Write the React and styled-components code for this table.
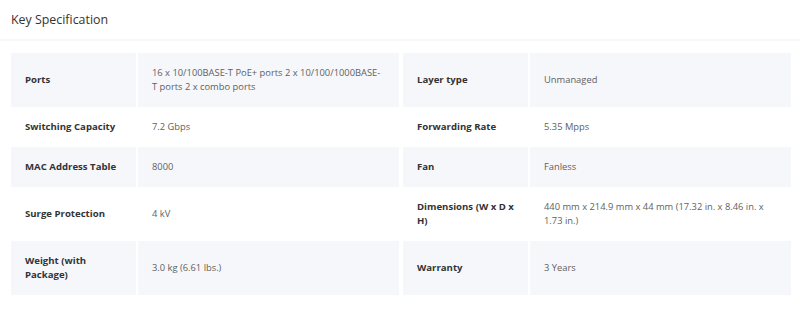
import styled, { createGlobalStyle } from "styled-components";

const GlobalStyle = createGlobalStyle`
  body {
    margin: 0;
    background: #ffffff;
    font-family: "Open Sans", "Noto Sans", sans-serif;
  }
`;

const Section = styled.section`
  width: 800px;
`;

const Header = styled.div`
  height: 39px;
  padding-left: 11px;
  display: flex;
  align-items: center;
  border-bottom: 2px solid #f6f7f9;
`;

const Title = styled.h2`
  margin: 0;
  font-size: 12.4px;
  font-weight: 400;
  color: #333333;
`;

const SpecGrid = styled.div`
  margin: 12px 0 0 11px;
  display: grid;
  grid-template-columns: 125px 261px 127px 261px;
  column-gap: 2px;
  width: 780px;
`;

const Cell = styled.div`
  background: ${(props) => (props.$shaded ? "#f6f7fb" : "#ffffff")};
  padding: 13px 16px 13px 14px;
  line-height: 14px;
  display: flex;
  align-items: center;
`;

const Label = styled(Cell)`
  margin-left: ${(props) => (props.$second ? "2px" : "0")};
  padding-right: 14px;
  font-size: 9.6px;
  font-weight: 700;
  color: #333333;
`;

const Value = styled(Cell)`
  font-size: 9.35px;
  font-weight: 400;
  color: #5f5f5f;
`;

const rows = [
  [
    ["Ports", "16 x 10/100BASE-T PoE+ ports 2 x 10/100/1000BASE-T ports 2 x combo ports"],
    ["Layer type", "Unmanaged"],
  ],
  [
    ["Switching Capacity", "7.2 Gbps"],
    ["Forwarding Rate", "5.35 Mpps"],
  ],
  [
    ["MAC Address Table", "8000"],
    ["Fan", "Fanless"],
  ],
  [
    ["Surge Protection", "4 kV"],
    ["Dimensions (W x D x H)", "440 mm x 214.9 mm x 44 mm (17.32 in. x 8.46 in. x 1.73 in.)"],
  ],
  [
    ["Weight (with Package)", "3.0 kg (6.61 lbs.)"],
    ["Warranty", "3 Years"],
  ],
];

export default function App() {
  return (
    <Section>
      <GlobalStyle />
      <Header>
        <Title>Key Specification</Title>
      </Header>
      <SpecGrid>
        {rows.map((row, i) =>
          row.map(([label, value], j) => {
            const shaded = i % 2 === 0;
            return [
              <Label key={label} $shaded={shaded} $second={j === 1}>
                {label}
              </Label>,
              <Value key={label + "-v"} $shaded={shaded}>
                {value}
              </Value>,
            ];
          })
        )}
      </SpecGrid>
    </Section>
  );
}
